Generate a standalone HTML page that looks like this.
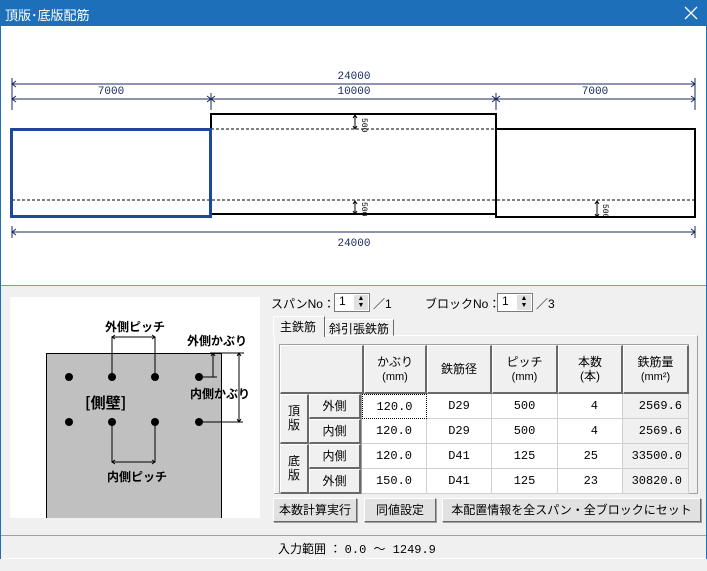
<!DOCTYPE html>
<html><head><meta charset="utf-8"><style>
*{margin:0;padding:0;box-sizing:border-box}
body{width:707px;height:571px;overflow:hidden;background:#f0f0f0;font-family:"Liberation Sans","Noto Sans CJK JP",sans-serif;font-size:12px;color:#000;position:relative}
.a{position:absolute}
.t{position:absolute;white-space:nowrap}
.btn{position:absolute;background:#e1e1e1;border:1px solid #fff;border-right-color:#696969;border-bottom-color:#696969;box-shadow:1px 1px 0 #a0a0a0;text-align:center;font-size:12px;line-height:22px}
.hc{position:absolute;background:#f0f0f0;border:1px solid #fff;border-right:2px solid #696969;border-bottom:2px solid #696969;text-align:center;font-size:12px}
.c{position:absolute;background:#fff;border-right:1px solid #d0d0d0;border-bottom:1px solid #d0d0d0;text-align:center;font-family:"Liberation Mono","Noto Sans CJK JP",monospace;font-size:12px;line-height:24px}
</style></head><body>
<div class="a" style="left:0;top:0;width:707px;height:26px;background:#1c6fb8"></div>
<div class="t" style="left:5px;top:5px;color:#fff;font-size:13px">頂版･底版配筋</div>
<svg class="a" style="left:684px;top:6px" width="14" height="14"><path d="M1 1L13 13M13 1L1 13" stroke="#fff" stroke-width="1.3"/></svg>
<div class="a" style="left:0;top:26px;width:707px;height:260px;background:#fff;border-left:1px solid #6a9cd0;border-right:1px solid #6a9cd0;border-bottom:1px solid #7a9cc0"></div>
<svg class="a" style="left:0;top:26px" width="707" height="260">
<g stroke="#1a2a60" stroke-width="1" fill="none">
<line x1="12" y1="58" x2="695" y2="58"/>
<line x1="12" y1="73" x2="695" y2="73"/>
<line x1="12" y1="206" x2="695" y2="206"/>
<line x1="12" y1="52" x2="12" y2="84"/><line x1="211" y1="67" x2="211" y2="84"/><line x1="496" y1="67" x2="496" y2="84"/><line x1="695" y1="52" x2="695" y2="84"/>
<line x1="12" y1="200" x2="12" y2="212"/><line x1="695" y1="200" x2="695" y2="212"/>
<path d="M16 55L12 58L16 61M691 55L695 58L691 61M16 70L12 73L16 76M207 70L211 73L207 76M215 70L211 73L215 76M492 70L496 73L492 76M500 70L496 73L500 76M691 70L695 73L691 76M16 203L12 206L16 209M691 203L695 206L691 209"/>
</g>
<g font-family="Liberation Mono" font-size="11" fill="#1a2a60" text-anchor="middle">
<text x="354" y="53">24000</text><text x="111" y="68">7000</text><text x="354" y="68">10000</text><text x="595" y="68">7000</text><text x="354" y="220">24000</text>
</g>
<line x1="211" y1="103" x2="695" y2="103" stroke="#000" stroke-dasharray="3,2"/>
<line x1="12" y1="174" x2="695" y2="174" stroke="#000" stroke-dasharray="3,2"/>
<path d="M211 103V88H496V103M211 188H496" stroke="#000" stroke-width="2" fill="none"/>
<path d="M496 103H695V191H496Z" stroke="#000" stroke-width="2" fill="none"/>
<line x1="496" y1="88" x2="496" y2="191" stroke="#000"/>
<rect x="11.5" y="103.5" width="199" height="87" stroke="#1e4898" stroke-width="3" fill="none"/>
<g font-family="Liberation Mono" font-size="8" fill="#000">
<text transform="translate(362,92) rotate(90)">500</text><text transform="translate(362,176) rotate(90)">500</text><text transform="translate(603,178) rotate(90)">500</text>
</g>
<path d="M355 89V103M353 92L355 89L357 92M353 100L355 103L357 100M355 175V188M353 178L355 175L357 178M353 185L355 188L357 185M597 175V191M595 178L597 175L599 178M595 188L597 191L599 188" stroke="#000" fill="none"/>
</svg>
<div class="a" style="left:10px;top:297px;width:250px;height:221px;background:#fff"></div>
<div class="a" style="left:46px;top:353px;width:176px;height:165px;background:#c0c0c0;border:1px solid #000;border-bottom:none"></div>
<svg class="a" style="left:10px;top:297px" width="250" height="221">
<g fill="#000"><circle cx="59" cy="80" r="4"/><circle cx="102" cy="80" r="4"/><circle cx="145" cy="80" r="4"/><circle cx="189" cy="80" r="4"/><circle cx="59" cy="125" r="4"/><circle cx="102" cy="125" r="4"/><circle cx="145" cy="125" r="4"/><circle cx="189" cy="125" r="4"/></g>
<g stroke="#000" fill="none">
<path d="M102 76V40M145 76V40M102 40H145M105 38L102 40L105 42M142 38L145 40L142 42"/>
<path d="M102 129V165M145 129V165M102 165H145M105 163L102 165L105 167M142 163L145 165L142 167"/>
<path d="M193 80H207M203 56V80M201 59L203 56L205 59M229 56V125M227 59L229 56L231 59M227 122L229 125L231 122M193 125H233M200 56H234"/>
</g>
<g font-weight="bold" font-size="12" font-family="Noto Sans CJK JP">
<text x="95" y="34">外側ピッチ</text><text x="177" y="48">外側かぶり</text><text x="180" y="101">内側かぶり</text><text x="97" y="184">内側ピッチ</text>
<text x="75" y="111" font-size="15">[側壁]</text></g>
</svg>
<div class="t" style="left:271px;top:295px">スパンNo：</div>
<div class="a" style="left:334px;top:293px;width:36px;height:19px;background:#fff;border:1px solid #7a7a7a"></div>
<div class="t" style="left:339px;top:294px">1</div>
<div class="a" style="left:354px;top:295px;width:14px;height:15px;background:#e1e1e1;font-size:7px;line-height:7px;text-align:center">▲<br>▼</div>
<div class="t" style="left:373px;top:295px">／1</div>
<div class="t" style="left:425px;top:295px">ブロックNo：</div>
<div class="a" style="left:497px;top:293px;width:36px;height:19px;background:#fff;border:1px solid #7a7a7a"></div>
<div class="t" style="left:502px;top:294px">1</div>
<div class="a" style="left:517px;top:295px;width:14px;height:15px;background:#e1e1e1;font-size:7px;line-height:7px;text-align:center">▲<br>▼</div>
<div class="t" style="left:536px;top:295px">／3</div>
<div class="a" style="left:274px;top:335px;width:424px;height:159px;border:1px solid #fff;border-right-color:#a0a0a0;border-bottom-color:#a0a0a0"></div>
<div class="a" style="left:325px;top:319px;width:69px;height:17px;border:1px solid #fff;border-right-color:#696969"></div>
<div class="t" style="left:329px;top:320px">斜引張鉄筋</div>
<div class="a" style="left:273px;top:316px;width:52px;height:21px;background:#f0f0f0;border:1px solid #fff;border-right-color:#696969;border-bottom:none"></div>
<div class="t" style="left:280px;top:318px">主鉄筋</div>
<div class="a" style="left:279px;top:344px;width:410px;height:150px;background:#a0a0a0"></div>
<div class="hc" style="left:280px;top:345px;width:84px;height:49px"></div>
<div class="hc" style="left:364px;top:345px;width:63px;height:49px;line-height:14px;padding-top:9px">かぶり<br><span style="font-size:11px">(mm)</span></div>
<div class="hc" style="left:427px;top:345px;width:65px;height:49px;line-height:47px">鉄筋径</div>
<div class="hc" style="left:492px;top:345px;width:66px;height:49px;line-height:14px;padding-top:9px">ピッチ<br><span style="font-size:11px">(mm)</span></div>
<div class="hc" style="left:558px;top:345px;width:65px;height:49px;line-height:14px;padding-top:9px">本数<br>(本)</div>
<div class="hc" style="left:623px;top:345px;width:66px;height:49px;line-height:14px;padding-top:9px">鉄筋量<br><span style="font-size:11px">(mm²)</span></div>
<div class="hc" style="left:280px;top:394px;width:29px;height:50px;line-height:14px;padding-top:9px">頂<br>版</div>
<div class="hc" style="left:280px;top:444px;width:29px;height:50px;line-height:14px;padding-top:9px">底<br>版</div>
<div class="hc" style="left:309px;top:394px;width:52px;height:25px;line-height:22px">外側</div>
<div class="hc" style="left:309px;top:419px;width:52px;height:25px;line-height:22px">内側</div>
<div class="hc" style="left:309px;top:444px;width:52px;height:25px;line-height:22px">内側</div>
<div class="hc" style="left:309px;top:469px;width:52px;height:25px;line-height:22px">外側</div>
<div class="c" style="left:362px;top:394px;width:65px;height:25px;border:1px dotted #000">120.0</div>
<div class="c" style="left:427px;top:394px;width:65px;height:25px">D29</div>
<div class="c" style="left:492px;top:394px;width:66px;height:25px">500</div>
<div class="c" style="left:558px;top:394px;width:65px;height:25px;text-align:right;padding-right:24px">4</div>
<div class="c" style="left:623px;top:394px;width:66px;height:25px;background:#f0f0f0;text-align:right;padding-right:6px">2569.6</div>
<div class="c" style="left:362px;top:419px;width:65px;height:25px">120.0</div>
<div class="c" style="left:427px;top:419px;width:65px;height:25px">D29</div>
<div class="c" style="left:492px;top:419px;width:66px;height:25px">500</div>
<div class="c" style="left:558px;top:419px;width:65px;height:25px;text-align:right;padding-right:24px">4</div>
<div class="c" style="left:623px;top:419px;width:66px;height:25px;background:#f0f0f0;text-align:right;padding-right:6px">2569.6</div>
<div class="c" style="left:362px;top:444px;width:65px;height:25px">120.0</div>
<div class="c" style="left:427px;top:444px;width:65px;height:25px">D41</div>
<div class="c" style="left:492px;top:444px;width:66px;height:25px">125</div>
<div class="c" style="left:558px;top:444px;width:65px;height:25px;text-align:right;padding-right:24px">25</div>
<div class="c" style="left:623px;top:444px;width:66px;height:25px;background:#f0f0f0;text-align:right;padding-right:6px">33500.0</div>
<div class="c" style="left:362px;top:469px;width:65px;height:25px">150.0</div>
<div class="c" style="left:427px;top:469px;width:65px;height:25px">D41</div>
<div class="c" style="left:492px;top:469px;width:66px;height:25px">125</div>
<div class="c" style="left:558px;top:469px;width:65px;height:25px;text-align:right;padding-right:24px">23</div>
<div class="c" style="left:623px;top:469px;width:66px;height:25px;background:#f0f0f0;text-align:right;padding-right:6px">30820.0</div>
<div class="btn" style="left:273px;top:498px;width:84px;height:24px">本数計算実行</div>
<div class="btn" style="left:364px;top:498px;width:72px;height:24px">同値設定</div>
<div class="btn" style="left:442px;top:498px;width:259px;height:24px">本配置情報を全スパン・全ブロックにセット</div>
<div class="a" style="left:1px;top:535px;width:705px;height:24px;border-top:1px solid #a0a0a0;border-bottom:1px solid #fff"></div>
<div class="t" style="left:278px;top:540px">入力範囲 ： <span style="font-family:'Liberation Mono',monospace">0.0 ～ 1249.9</span></div>
<div class="a" style="left:0;top:26px;width:1px;height:533px;background:#1c6fb8"></div>
<div class="a" style="left:706px;top:26px;width:1px;height:533px;background:#1c6fb8"></div>
</body></html>
